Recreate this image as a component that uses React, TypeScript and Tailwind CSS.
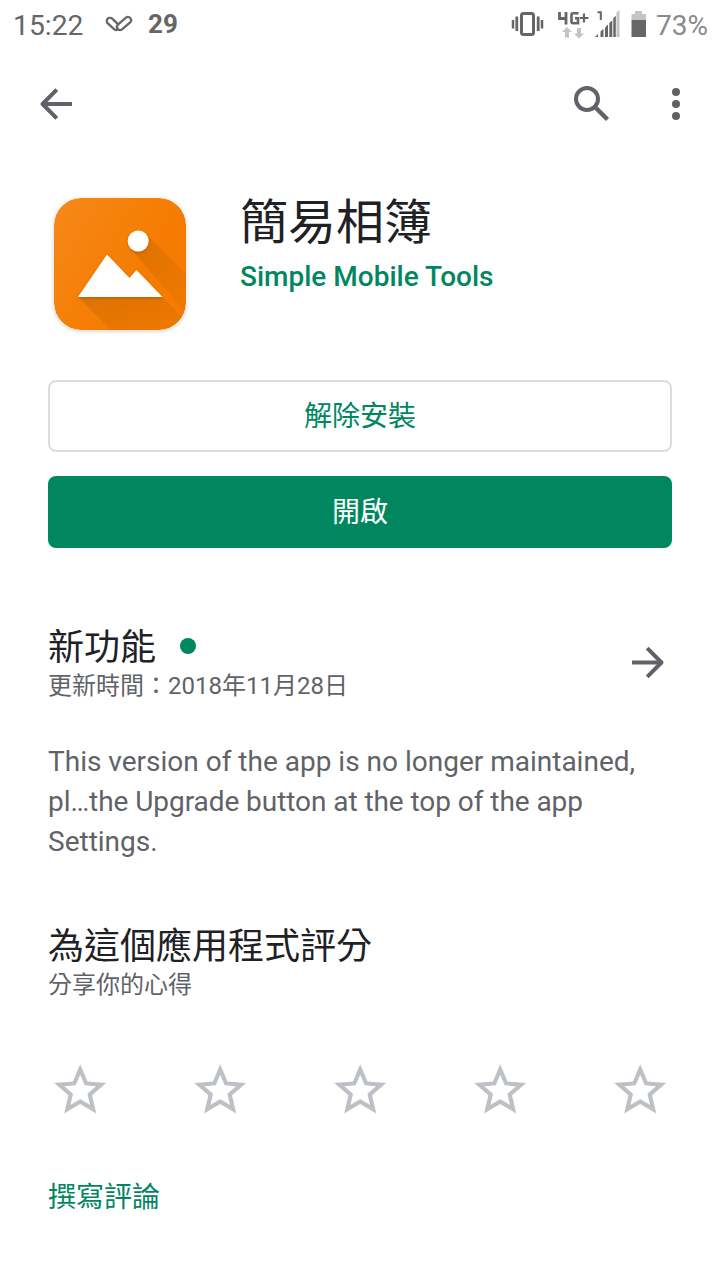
import type { ReactNode } from "react";

const ACCENT = "text-[#01875f]";

function StatusBar() {
  return (
    <div className="flex h-12 items-center justify-between text-[#666]">
      <div className="flex items-center pl-[13px]">
        <span className="w-[92px] pt-1 text-[28.3px] leading-[50px]">15:22</span>
        <svg width="28" height="18" viewBox="0 0 28 18" fill="none" stroke="currentColor" strokeWidth="2.3">
          <path d="M12.9 9.6L20.9 2.6A3.2 3.2 0 0 1 25.1 7.4L17.1 14.4A3.2 3.2 0 0 1 12.9 9.6" />
          <path d="M13 9.2L7.2 3.65A3.2 3.2 0 0 0 2.8 8.35L9.3 14.35Q11.5 15.8 13.2 14" />
        </svg>
        <span className="ml-[15px] pt-px text-[26px] font-bold leading-[47px]">29</span>
      </div>

      <div className="flex items-center pr-3">
        {/* Vibrate, network, signal, battery */}
        <svg width="136" height="48" viewBox="0 0 136 48" fill="none" stroke="currentColor">
          <rect x="10.5" y="13.5" width="12" height="21" rx="2" strokeWidth="3" />
          <path d="M5.8 16.5v14.5M27.2 16.5v14.5" strokeWidth="2.8" />
          <path d="M2 20v8.5M31 20v8.5" strokeWidth="2.5" />
          <path d="M48.5 12v6.5h7.5M55 12v12.5" strokeWidth="2.8" />
          <path d="M67.5 13.3h-5.500q-1.5 0-1.5 1.5v6.8q0 1.6 1.5 1.6h5v-5h-3" strokeWidth="2.6" />
          <path d="M68.8 18h8.7M73 13.5v9" strokeWidth="2.2" />
          <g fill="#c4c4c4" stroke="none">
            <path d="M56 27l5 5h-3v5.5h-4V32h-3z" />
            <path d="M68 38.5l5-5h-3V28h-4v5.5h-3z" />
            <path d="M105.5 12.5l3-2.5v27h-3z" />
          </g>
          <path d="M86.5 12.2h3.3V20" strokeWidth="2" />
          <g fill="currentColor" stroke="none">
            <path d="M84 37l3-3v3z" />
            <path d="M89.5 31.5l3-2.8V37h-3z" />
            <path d="M94 27.5l3-2.9V37h-3z" />
            <path d="M98.3 23l3-2.8V37h-3z" />
            <path d="M102.3 18.2l2.5-2.4V37h-2.5z" />
          </g>
          <path d="M120.500 20v-6h3.500v-3h7v3h4v6z" fill="#c4c4c4" stroke="none" />
          <path d="M120.500 20h14.500v17h-14.500z" fill="currentColor" stroke="none" />
        </svg>
        <span className="ml-[9px] pt-1 text-[28px] leading-[50px] text-[#8a8a8a]">73%</span>
      </div>
    </div>
  );
}

function Toolbar() {
  return (
    <div className="flex h-28 items-center justify-between px-8 text-[#5f6368]">
      <button aria-label="返回">
        <svg width="48" height="48" viewBox="0 0 48 48" fill="none" stroke="currentColor" strokeWidth="4">
          <path d="M40 24H10.5" />
          <path d="M24.8 9.7L10.5 24l14.3 14.3" strokeLinejoin="round" />
        </svg>
      </button>
      <div className="flex items-center gap-9">
        <button aria-label="搜尋">
          <svg width="48" height="48" viewBox="0 0 48 48" fill="none" stroke="currentColor" strokeWidth="4">
            <circle cx="19" cy="19" r="11" />
            <path d="M28 28l11.5 11.5" strokeWidth="4.4" />
          </svg>
        </button>
        <button aria-label="更多選項" className="-mr-3">
          <svg width="48" height="48" viewBox="0 0 48 48" fill="currentColor">
            <circle cx="24" cy="12" r="4" />
            <circle cx="24" cy="24" r="4" />
            <circle cx="24" cy="36" r="4" />
          </svg>
        </button>
      </div>
    </div>
  );
}

function GalleryIcon() {
  return (
    <svg
      className="rounded-[27px] shadow-[0_1px_4px_rgba(0,0,0,0.2)]"
      width="132"
      height="132"
      viewBox="0 0 132 132"
    >
      <defs>
        <linearGradient id="tile" x1="0" y1="0" x2="1" y2="0.6">
          <stop offset="0" stopColor="#f68819" />
          <stop offset="0.75" stopColor="#f57c00" />
        </linearGradient>
        <linearGradient id="cast" x1="0" y1="0" x2="1" y2="1">
          <stop offset="0" stopColor="#000" stopOpacity="0.1" />
          <stop offset="1" stopColor="#000" stopOpacity="0.02" />
        </linearGradient>
        <filter id="soft" x="-20%" y="-20%" width="140%" height="140%">
          <feDropShadow dx="0" dy="1" stdDeviation="1.5" floodOpacity="0.22" />
        </filter>
      </defs>
      <rect width="132" height="132" rx="27" fill="url(#tile)" />
      <path d="M91.5 35.5L132 76v38.5L76.5 50.5z" fill="url(#cast)" />
      <path d="M24 99l33 33h75v-9.5L108.5 99z" fill="url(#cast)" />
      <g fill="#fff" filter="url(#soft)">
        <circle cx="84.2" cy="43" r="10.5" />
        <path d="M24 99l29-42.5L75.5 80l7-8L108.5 99z" />
      </g>
    </svg>
  );
}

function Section({ title, subtitle, dot, children }: {
  title: string;
  subtitle: string;
  dot?: boolean;
  children?: ReactNode;
}) {
  return (
    <div className="flex items-center justify-between">
      <div>
        <h2 className="flex h-12 items-center gap-6 text-[36px] text-[#202124]">
          <span className="pt-1">{title}</span>
          {dot && <span className="size-4 rounded-full bg-[#01875f]" />}
        </h2>
        <p className="text-[24px] leading-8 text-[#5f6368]">{subtitle}</p>
      </div>
      {children}
    </div>
  );
}

function Star() {
  return (
    <svg width="62.4" height="62.4" viewBox="0 0 24 24" fill="#bdc1c6">
      <path d="M22 9.24l-7.19-.62L12 2 9.19 8.63 2 9.24l5.46 4.73L5.82 21 12 17.27 18.18 21l-1.63-7.03L22 9.24zM12 15.4l-3.76 2.27 1-4.28-3.32-2.88 4.38-.38L12 6.1l1.71 4.04 4.38.38-3.32 2.88 1 4.28L12 15.4z" />
    </svg>
  );
}

export default function App() {
  return (
    <div className="h-[1280px] w-[720px] overflow-hidden bg-white font-['Roboto','Noto_Sans_CJK_TC',sans-serif]">
      <StatusBar />
      <Toolbar />

      <main className="px-12">
        {/* App header */}
        <div className="flex gap-[54px] pt-[38px] pl-1.5">
          <GalleryIcon />
          <div className="-mt-[7px]">
            <h1 className="text-[48px] leading-[64px] text-[#202124]">簡易相簿</h1>
            <p className={`text-[28px] leading-[44px] font-medium ${ACCENT}`}>Simple Mobile Tools</p>
          </div>
        </div>

        <div className="mt-[50px] flex flex-col gap-6">
          <button className={`h-[72px] rounded-lg border-2 border-[#dadce0] pt-0.5 text-[28px] ${ACCENT}`}>
            解除安裝
          </button>
          <button className="h-[72px] rounded-lg bg-[#01875f] pt-0.5 text-[28px] text-white">開啟</button>
        </div>

        <div className="mt-[74px]">
          <Section title="新功能" subtitle="更新時間：2018年11月28日" dot>
            <svg width="48" height="48" viewBox="0 0 48 48" fill="none" stroke="#5f6368" strokeWidth="4">
              <path d="M8 24.5h29.500" />
              <path d="M23.2 10.2l14.3 14.3-14.3 14.3" strokeLinejoin="round" />
            </svg>
          </Section>
        </div>

        <p className="mt-10 text-[28px] leading-10 text-[#5f6368]">
          This version of the app is no longer maintained,
          <br />
          <span className="tracking-[-0.06px]">pl…the Upgrade button at the top of the app</span>
          <br />
          Settings.
        </p>

        <div className="mt-[59px]">
          <Section title="為這個應用程式評分" subtitle="分享你的心得" />
        </div>

        <div className="mt-[57.6px] flex justify-between px-[0.8px]">
          {[1, 2, 3, 4, 5].map((n) => (
            <Star key={n} />
          ))}
        </div>

        <button className={`mt-[57px] text-[28px] leading-10 ${ACCENT}`}>撰寫評論</button>
      </main>
    </div>
  );
}
